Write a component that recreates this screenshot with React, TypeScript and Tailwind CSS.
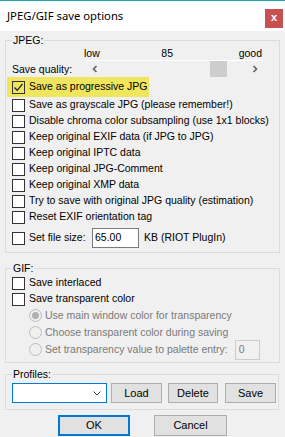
import React from "react";

const font = "font-['Liberation_Sans',Arial,sans-serif]";

const Box: React.FC<{ checked?: boolean; clear?: boolean }> = ({ checked, clear }) => (
    <span className={`w-[13px] h-[13px] border border-[#333333] shrink-0 flex items-center justify-center ${clear ? "" : "bg-white"}`}>
        {checked && (
            <svg width="11" height="11" viewBox="0 0 11 11">
                <path d="M1.5 5.5 L4.2 8.3 L9.5 2" fill="none" stroke="#222" strokeWidth="1.3" />
            </svg>
        )}
    </span>
);

const CheckRow: React.FC<{ label: string }> = ({ label }) => (
    <div className="h-[16px] flex items-center whitespace-nowrap">
        <Box />
        <span className="ml-[4px]">{label}</span>
    </div>
);

const Radio: React.FC<{ label: string; on?: boolean; children?: React.ReactNode }> = ({ label, on, children }) => (
    <div className="h-[17px] flex items-center pl-[17px] whitespace-nowrap">
        <span className="w-[13px] h-[13px] rounded-full border border-[#bcbcbc] bg-[#f0f0f0] flex items-center justify-center shrink-0">
            {on && <span className="w-[7px] h-[7px] rounded-full bg-[#b0b0b0]" />}
        </span>
        <span className="ml-[3px] text-[#7a7a7a]">{label}</span>
        {children}
    </div>
);

const Btn: React.FC<{ label: string; w: string }> = ({ label, w }) => (
    <button className={`${w} h-[20px] bg-[#e1e1e1] border border-[#adadad] text-black text-[11px] flex items-center justify-center`}>
        {label}
    </button>
);

const App: React.FC = () => {
    return (
        <div className={`w-[285px] h-[437px] bg-[#f0f0f0] border-t border-[#1fa9b8] overflow-hidden text-[10.5px] text-black ${font}`}>
            {/* title bar */}
            <div className="h-[30px] bg-white flex items-center justify-between pl-[7px] pr-[2px]">
                <span className="text-[11.3px] font-['Noto_Sans',sans-serif] text-black">JPEG/GIF save options</span>
                <span className="w-[18px] h-[19px] mt-[5px] bg-[#c75050] text-white text-[11px] font-bold flex items-center justify-center leading-none pb-[2px]">x</span>
            </div>

            {/* JPEG */}
            <fieldset className="mx-[5px] mt-[2px] w-[275px] border border-[#dcdcdc] pl-[6px] pb-[4px]">
                <legend className="px-[1px] leading-[14px]">JPEG:</legend>
                <div className="h-[13px] flex items-center">
                    <div className="ml-[72px] w-[178px] flex justify-between leading-[11px]">
                        <span>low</span>
                        <span className="-ml-[4px]">85</span>
                        <span>good</span>
                    </div>
                </div>
                <div className="h-[17px] flex">
                    <span className="w-[74px] pt-[3px] leading-[13px] whitespace-nowrap">Save quality:</span>
                    <div className="w-[177px] h-[17px] border-t border-white flex items-center">
                        <span className="w-[17px] h-[16px] flex items-center justify-center">
                            <svg width="6" height="8" viewBox="0 0 6 8"><path d="M4.5 1 L1.5 4 L4.5 7" fill="none" stroke="#606060" strokeWidth="1.6" /></svg>
                        </span>
                        <div className="w-[143px] h-[16px] pl-[107px]">
                            <div className="w-[17px] h-[16px] bg-[#cdcdcd]" />
                        </div>
                        <span className="w-[17px] h-[16px] flex items-center justify-center">
                            <svg width="6" height="8" viewBox="0 0 6 8"><path d="M1.5 1 L4.5 4 L1.5 7" fill="none" stroke="#606060" strokeWidth="1.6" /></svg>
                        </span>
                    </div>
                </div>
                <div className="-ml-[5px] pl-[5px] w-[142px] h-[20px] bg-[#efe65e] flex items-center whitespace-nowrap">
                    <Box checked clear />
                    <span className="ml-[4px]">Save as progressive JPG</span>
                </div>
                <CheckRow label="Save as grayscale JPG (please remember!)" />
                <CheckRow label="Disable chroma color subsampling (use 1x1 blocks)" />
                <CheckRow label="Keep original EXIF data (if JPG to JPG)" />
                <CheckRow label="Keep original IPTC data" />
                <CheckRow label="Keep original JPG-Comment" />
                <CheckRow label="Keep original XMP data" />
                <CheckRow label="Try to save with original JPG quality (estimation)" />
                <CheckRow label="Reset EXIF orientation tag" />
                <div className="mt-[3px] h-[20px] flex items-center whitespace-nowrap">
                    <Box />
                    <span className="ml-[4px] w-[63px]">Set file size:</span>
                    <span className="w-[47px] h-[20px] bg-white border border-[#7a7a7a] pl-[2px] flex items-center">65.00</span>
                    <span className="ml-[5px]">KB (RIOT PlugIn)</span>
                </div>
            </fieldset>

            {/* GIF */}
            <fieldset className="mx-[5px] mt-[8px] w-[275px] border border-[#dcdcdc] pl-[6px] pb-[4px]">
                <legend className="px-[1px] leading-[14px]">GIF:</legend>
                <CheckRow label="Save interlaced" />
                <CheckRow label="Save transparent color" />
                <Radio label="Use main window color for transparency" on />
                <Radio label="Choose transparent color during saving" />
                <Radio label="Set transparency value to palette entry:">
                    <span className="ml-[7px] w-[25px] h-[20px] shrink-0 border border-[#cccccc] bg-[#f0f0f0] text-[#7a7a7a] pl-[3px] flex items-center">0</span>
                </Radio>
            </fieldset>

            {/* Profiles */}
            <fieldset className="mx-[5px] mt-[4px] w-[274px] border border-[#dcdcdc] pl-[6px] pb-[6px]">
                <legend className="px-[1px] leading-[14px]">Profiles:</legend>
                <div className="mt-[2px] flex items-center">
                    <div className="w-[95px] h-[20px] bg-white border border-[#0078d7] flex items-center justify-end pr-[5px]">
                        <svg width="8" height="5" viewBox="0 0 8 5"><path d="M0.5 0.5 L4 4 L7.5 0.5" fill="none" stroke="#444" strokeWidth="1" /></svg>
                    </div>
                    <span className="ml-[4px]"><Btn label="Load" w="w-[51px]" /></span>
                    <span className="ml-[6px]"><Btn label="Delete" w="w-[50px]" /></span>
                    <span className="ml-[7px]"><Btn label="Save" w="w-[51px]" /></span>
                </div>
            </fieldset>

            <div className="mt-[5px] flex justify-center gap-[24px] text-[11px]">
                <button className="w-[72px] h-[21px] bg-[#e1e1e1] border-2 border-[#0078d7] flex items-center justify-center">OK</button>
                <button className="w-[73px] h-[21px] bg-[#e1e1e1] border border-[#adadad] flex items-center justify-center">Cancel</button>
            </div>
        </div>
    );
};

export default App;
